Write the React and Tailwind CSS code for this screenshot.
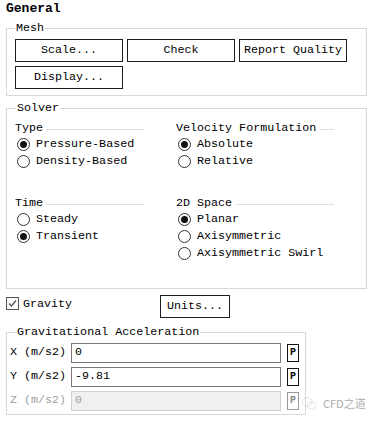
import React from 'react'

const font = { fontFamily: '"Liberation Mono", "DejaVu Sans Mono", monospace' }

function Btn({ children, className = '' }) {
  return (
    <div className={`h-[23px] border border-[#1e1e1e] bg-white flex items-center justify-center text-[11.7px] text-black leading-none ${className}`}>
      {children}
    </div>
  )
}

function Radio({ label, checked }) {
  return (
    <div className="h-[17px] flex items-center">
      <span className="ml-[2px] mr-[6px] w-[13px] h-[13px] rounded-full border border-[#333] bg-white flex items-center justify-center">
        {checked && <span className="w-[7px] h-[7px] rounded-full bg-[#111]" />}
      </span>
      <span className="text-[11.7px] leading-none text-black">{label}</span>
    </div>
  )
}

function Group({ title, width, options }) {
  return (
    <div style={{ width }}>
      <div className="h-[14px] flex items-center">
        <span className="text-[11.7px] leading-none text-black">{title}</span>
        <span className="flex-1 ml-[4px] h-px bg-[#e2e2e2]" />
      </div>
      {options.map(([l, c]) => (
        <Radio key={l} label={l} checked={c} />
      ))}
    </div>
  )
}

function AccelRow({ label, value, disabled }) {
  return (
    <div className="flex items-center h-[20px]">
      <span className={`w-[61px] text-[11.7px] leading-none ${disabled ? 'text-[#a0a0a0]' : 'text-black'}`}>{label}</span>
      <div className={`w-[210px] h-[20px] border flex items-center pl-[3px] text-[11.7px] leading-none ${disabled ? 'border-[#d0d0d0] bg-[#f0f0f0] text-[#a0a0a0]' : 'border-[#7a7a7a] bg-white text-black'}`}>
        {value}
      </div>
      <div className={`ml-[6px] w-[12px] h-[18px] border flex items-center justify-center text-[10px] font-bold leading-none ${disabled ? 'border-[#9a9a9a] text-[#8a8a8a]' : 'border-[#111] text-black'}`}>
        P
      </div>
    </div>
  )
}

export default function App() {
  return (
    <div className="relative w-[373px] h-[422px] bg-white pl-[6px] overflow-hidden" style={font}>
      <div className="h-[16px] pt-[2px] flex items-center text-[13px] font-bold text-black">General</div>

      <fieldset className="mt-[5px] w-[361px] border border-[#d8d8d8] pl-[8px] pt-[4px] pb-[6px]">
        <legend className="px-[1px] text-[11.7px] leading-[14px] text-black">Mesh</legend>
        <div className="flex gap-[4px]">
          <Btn className="w-[108px]">Scale...</Btn>
          <Btn className="w-[108px]">Check</Btn>
          <Btn className="w-[108px]">Report Quality</Btn>
        </div>
        <Btn className="w-[108px] mt-[4px]">Display...</Btn>
      </fieldset>

      <fieldset className="mt-[5px] w-[361px] border border-[#d8d8d8] pl-[8px] pt-[7px] pb-[26px]">
        <legend className="ml-[1px] px-[1px] text-[11.7px] leading-[14px] text-black">Solver</legend>
        <div className="grid grid-cols-[161px_1fr] gap-y-[27px]">
          <Group title="Type" width={130} options={[['Pressure-Based', true], ['Density-Based', false]]} />
          <Group title="Velocity Formulation" width={158} options={[['Absolute', true], ['Relative', false]]} />
          <Group title="Time" width={130} options={[['Steady', false], ['Transient', true]]} />
          <Group title="2D Space" width={158} options={[['Planar', true], ['Axisymmetric', false], ['Axisymmetric Swirl', false]]} />
        </div>
      </fieldset>

      <div className="mt-[6px] flex items-start">
        <span className="mt-[2px] w-[13px] h-[13px] border border-[#555] bg-white flex items-center justify-center">
          <svg width="11" height="11" viewBox="0 0 11 11">
            <path d="M2 5.5 L4.5 8 L9 2.5" fill="none" stroke="#555" strokeWidth="1.3" />
          </svg>
        </span>
        <span className="ml-[4px] mt-[2px] text-[11.7px] leading-[14px] text-black w-[137px]">Gravity</span>
        <Btn className="w-[70px]">Units...</Btn>
      </div>

      <fieldset className="mt-[7px] w-[300px] border border-[#d8d8d8] pl-[3px] pt-[4px] pb-[3px]">
        <legend className="ml-[6px] px-[1px] text-[11.7px] leading-[14px] text-black">Gravitational Acceleration</legend>
        <div className="flex flex-col gap-[4px]">
          <AccelRow label="X (m/s2)" value="0" />
          <AccelRow label="Y (m/s2)" value="-9.81" />
          <AccelRow label="Z (m/s2)" value="0" disabled />
        </div>
      </fieldset>

      <div className="absolute left-[301px] top-[396px] flex items-center opacity-70">
        <svg width="16" height="15" viewBox="0 0 16 15">
          <ellipse cx="6" cy="6" rx="5" ry="4.2" fill="none" stroke="#c8c8c8" strokeWidth="1" strokeDasharray="2 1" />
          <ellipse cx="10.5" cy="9.5" rx="4.3" ry="3.6" fill="none" stroke="#c8c8c8" strokeWidth="1" strokeDasharray="2 1" />
        </svg>
        <span className="ml-[6px] text-[11px] text-[#8a8a8a] leading-none" style={{ fontFamily: '"Noto Sans CJK SC", sans-serif' }}>CFD之道</span>
      </div>
    </div>
  )
}
